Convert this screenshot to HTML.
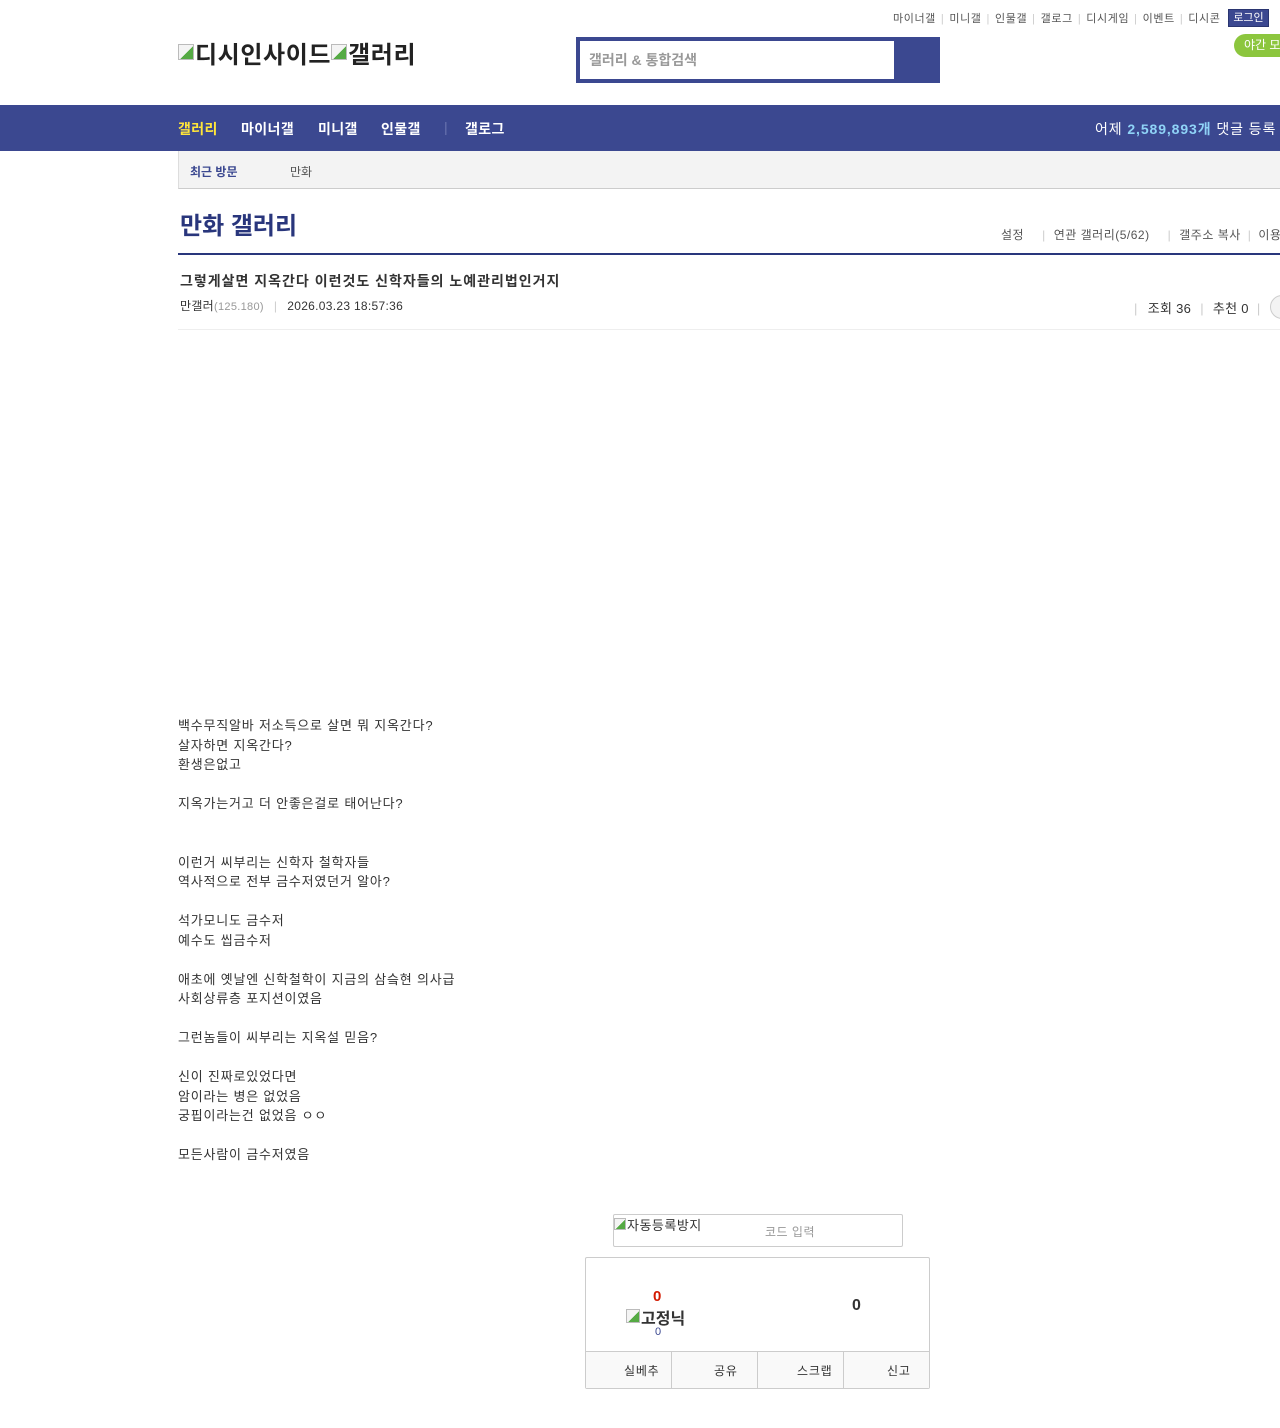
<!DOCTYPE html>
<html><head><meta charset="utf-8">
<style>
*{margin:0;padding:0;box-sizing:border-box}
body{width:1280px;height:1428px;background:#fff;position:relative;overflow:hidden;font-family:"Liberation Sans","Noto Sans CJK KR",sans-serif;color:#333}
.a{position:absolute;white-space:nowrap}
.topl{top:10px;font-size:11px;color:#555;letter-spacing:0.6px}
.topl span.s{color:#ccc;margin:0 5px}
.broken{display:inline-block;width:16px;height:16px;border:1px solid #bbb;background:linear-gradient(135deg,#f4f4f4 55%,#5a4 55%);vertical-align:top;margin-top:4px;margin-right:1px}
.nav{top:105px;left:0;width:1280px;height:46px;background:#3b4890}
.nav span{position:absolute;top:14px;font-size:14px;font-weight:bold;color:#fff;letter-spacing:0.4px}
.body p{font-size:13px;line-height:19.5px;color:#333;letter-spacing:0.8px}
.btn{position:absolute;top:1352px;height:36px;border-right:1px solid #ccc;background:#f9f9f9;font-size:12px;color:#333;line-height:38px;letter-spacing:0.8px}
</style></head><body>

<div class="a topl" style="left:893px">마이너갤<span class="s">|</span>미니갤<span class="s">|</span>인물갤<span class="s">|</span>갤로그<span class="s">|</span>디시게임<span class="s">|</span>이벤트<span class="s">|</span>디시콘</div>
<div class="a" style="left:1228px;top:9px;width:41px;height:18px;background:#3b4890;border:1px solid #2a3570;color:#fff;font-size:11px;text-align:center;line-height:16px">로그인</div>
<div class="a" style="left:1234px;top:34px;width:60px;height:23px;background:#8cc63e;border-radius:12px;color:#fff;font-size:12px;line-height:23px;padding-left:10px">야간 모드</div>

<div class="a" style="left:178px;top:40px;font-size:24px;font-weight:bold;color:#222;line-height:32px;letter-spacing:0.6px"><span class="broken"></span>디시인사이드<span class="broken"></span>갤러리</div>

<div class="a" style="left:576px;top:37px;width:364px;height:46px;background:#3b4890"></div>
<div class="a" style="left:580px;top:41px;width:314px;height:38px;background:#fff;font-size:14px;font-weight:bold;color:#999;line-height:38px;padding-left:9px">갤러리 &amp; 통합검색</div>

<div class="a nav">
<span style="left:178px;color:#ffe53a">갤러리</span>
<span style="left:241px">마이너갤</span>
<span style="left:318px">미니갤</span>
<span style="left:381px">인물갤</span>
<span style="left:444px;color:#6a74b0;font-weight:normal">|</span>
<span style="left:465px">갤로그</span>
<span style="left:1095px;font-weight:normal;letter-spacing:0.9px">어제 <b style="color:#8fd3f7">2,589,893개</b> 댓글 등록</span>
</div>

<div class="a" style="left:178px;top:151px;width:1102px;height:38px;background:#f3f3f3;border-bottom:1px solid #ccc;border-left:1px solid #ddd"></div>
<div class="a" style="left:190px;top:163px;font-size:12px;font-weight:bold;color:#3b4890">최근 방문</div>
<div class="a" style="left:290px;top:163px;font-size:12px;color:#555">만화</div>

<div class="a" style="left:180px;top:206px;font-size:24px;font-weight:bold;color:#29367c">만화 갤러리</div>
<div class="a" style="left:1001px;top:226px;font-size:12px;color:#555;letter-spacing:0.5px">설정<span style="color:#ccc;margin:0 8px 0 18px">|</span>연관 갤러리(5/62)<span style="color:#ccc;margin:0 8px 0 18px">|</span>갤주소 복사<span style="color:#ccc;margin:0 7px">|</span>이용</div>
<div class="a" style="left:178px;top:253px;width:1102px;height:2px;background:#29367c"></div>

<div class="a" style="left:180px;top:271px;font-size:14px;font-weight:bold;color:#333;letter-spacing:1px">그렇게살면 지옥간다 이런것도 신학자들의 노예관리법인거지</div>
<div class="a" style="left:180px;top:297px;font-size:12px;color:#333;letter-spacing:0.3px">만갤러<span style="font-size:11px;color:#999">(125.180)</span><span style="color:#ccc;margin:0 10px">|</span>2026.03.23 18:57:36</div>
<div class="a" style="left:1134px;top:298px;font-size:13px;color:#333;letter-spacing:0.3px"><span style="color:#ccc;margin-right:10px">|</span>조회 36<span style="color:#ccc;margin:0 9px">|</span>추천 0<span style="color:#ccc;margin:0 8px">|</span></div>
<div class="a" style="left:1270px;top:295px;width:24px;height:24px;border:1px solid #ccc;border-radius:50%;background:#f3f3f3"></div>
<div class="a" style="left:178px;top:329px;width:1102px;height:1px;background:#eee"></div>

<div class="a body" style="left:178px;top:716px">
<p>백수무직알바 저소득으로 살면 뭐 지옥간다?</p>
<p>살자하면 지옥간다?</p>
<p>환생은없고</p>
<p>&nbsp;</p>
<p>지옥가는거고 더 안좋은걸로 태어난다?</p>
<p>&nbsp;</p><p>&nbsp;</p>
<p>이런거 씨부리는 신학자 철학자들</p>
<p>역사적으로 전부 금수저였던거 알아?</p>
<p>&nbsp;</p>
<p>석가모니도 금수저</p>
<p>예수도 씹금수저</p>
<p>&nbsp;</p>
<p>애초에 옛날엔 신학철학이 지금의 삼슼현 의사급</p>
<p>사회상류층 포지션이였음</p>
<p>&nbsp;</p>
<p>그런놈들이 씨부리는 지옥설 믿음?</p>
<p>&nbsp;</p>
<p>신이 진짜로있었다면</p>
<p>암이라는 병은 없었음</p>
<p>궁핍이라는건 없었음 ㅇㅇ</p>
<p>&nbsp;</p>
<p>모든사람이 금수저였음</p>
</div>

<div class="a" style="left:613px;top:1214px;width:290px;height:33px;border:1px solid #ccc;border-radius:2px"></div>
<div class="a" style="left:614px;top:1215px;font-size:13px;color:#333;letter-spacing:0.5px"><span class="broken" style="width:12px;height:12px;margin-top:3px"></span>자동등록방지</div>
<div class="a" style="left:765px;top:1223px;font-size:12px;color:#999;letter-spacing:0.5px">코드 입력</div>

<div class="a" style="left:585px;top:1257px;width:345px;height:132px;border:1px solid #ccc;border-radius:2px"></div>
<div class="a" style="left:653px;top:1288px;font-size:15px;font-weight:bold;color:#d31900">0</div>
<div class="a" style="left:626px;top:1305px;font-size:16px;font-weight:bold;color:#333"><span class="broken" style="width:14px;height:14px;margin-top:4px"></span>고정닉</div>
<div class="a" style="left:655px;top:1326px;font-size:11px;color:#3b4890">0</div>
<div class="a" style="left:852px;top:1297px;font-size:16px;font-weight:bold;color:#333">0</div>
<div class="a" style="left:586px;top:1351px;width:343px;height:1px;background:#ccc"></div>
<div class="btn" style="left:586px;width:86px;padding-left:38px">실베추</div>
<div class="btn" style="left:672px;width:86px;padding-left:42px">공유</div>
<div class="btn" style="left:758px;width:86px;padding-left:39px">스크랩</div>
<div class="btn" style="left:844px;width:85px;border-right:none;padding-left:43px">신고</div>

</body></html>
